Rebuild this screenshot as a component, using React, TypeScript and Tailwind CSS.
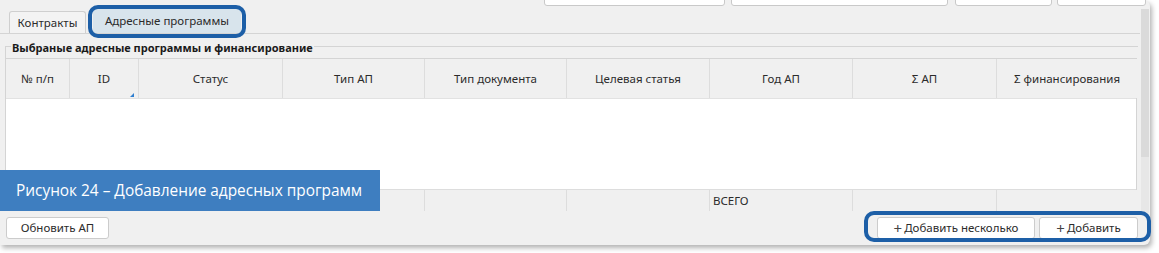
import React from "react";

const cols = [
  { w: "w-[64px]", label: "№ п/п" },
  { w: "w-[69px]", label: "ID", mark: true },
  { w: "w-[144px]", label: "Статус" },
  { w: "w-[142px]", label: "Тип АП" },
  { w: "w-[142px]", label: "Тип документа" },
  { w: "w-[143px]", label: "Целевая статья" },
  { w: "w-[143px]", label: "Год АП", total: true },
  { w: "w-[144px]", label: "Σ АП" },
  { w: "w-[140px]", label: "Σ финансирования", last: true },
];

export default function App() {
  return (
    <div className="relative w-[1159px] h-[253px] bg-white overflow-hidden font-['Noto_Sans',sans-serif] text-[#2b2b2b]">
      <div className="w-[1150px] h-[245px] bg-[#f0f0f0] rounded-r-[6px] shadow-[2px_3px_5px_rgba(0,0,0,0.3)] flex flex-col">
        {/* top buttons (cut off) */}
        <div className="h-[6px] flex items-end pl-[544px]">
          <div className="w-[181px] h-[24px] shrink-0 bg-white border border-[#c9c9c9] rounded-[3px]" />
          <div className="ml-[6px] w-[217px] h-[24px] shrink-0 bg-white border border-[#c9c9c9] rounded-[3px]" />
          <div className="ml-[7px] w-[97px] h-[24px] shrink-0 bg-white border border-[#c9c9c9] rounded-[3px]" />
          <div className="ml-[5px] w-[89px] h-[24px] shrink-0 bg-white border border-[#c9c9c9] rounded-[3px]" />
        </div>
        <div className="flex flex-1">
          {/* main column */}
          <div className="w-[1140px] flex flex-col">
            {/* tab strip */}
            <div className="h-[28px] flex items-end pl-[9px] border-b border-[#d4d4d4]">
              <div className="w-[77px] h-[22px] border border-b-0 border-[#cfcfcf] rounded-t-[3px] bg-[#f3f3f3] flex items-center justify-center text-[11.5px]">
                Контракты
              </div>
              <div className="ml-[7px] w-[148px] h-[25px] bg-[#d8e4ec] rounded-t-[3px] flex items-center justify-center text-[11.5px]">
                Адресные программы
              </div>
            </div>
            {/* group box */}
            <div className="mt-[12px] ml-[5px] w-[1133px] relative border-t border-l border-[#d4d4d4]">
              <div className="absolute left-[5px] -top-[7px] px-[1px] bg-[#f0f0f0] font-bold text-[11px] leading-[16px] text-[#1a1a1a]">
                Выбраные адресные программы и финансирование
              </div>
              <div className="mt-[11px] w-[1131px] border-t border-r border-[#d4d4d4]">
                <div className="flex h-[40px] border-b border-[#e2e2e2]">
                  {cols.map((c, i) => (
                    <div
                      key={i}
                      className={`${c.w} relative shrink-0 bg-[#f0f0f0] flex items-center justify-center text-[11.5px] ${c.last ? "" : "border-r border-[#dddddd]"}`}
                    >
                      {c.label}
                      {c.mark && (
                        <div className="absolute right-[4px] bottom-[1px] w-0 h-0 border-l-[4px] border-l-transparent border-b-[4px] border-b-[#2f7fd0]" />
                      )}
                    </div>
                  ))}
                </div>
                <div className="h-[90px] bg-white" />
                <div className="flex h-[22px] border-t border-[#dddddd]">
                  {cols.map((c, i) => (
                    <div
                      key={i}
                      className={`${c.w} shrink-0 bg-[#f0f0f0] flex items-center pl-[3px] text-[11.5px] ${c.last ? "" : "border-r border-[#dddddd]"}`}
                    >
                      {c.total ? "ВСЕГО" : ""}
                    </div>
                  ))}
                </div>
              </div>
            </div>
            {/* bottom buttons */}
            <div className="mt-[6px] flex items-center pl-[6px]">
              <div className="w-[103px] h-[22px] bg-white border border-[#cccccc] rounded-[3px] flex items-center justify-center text-[11.5px]">
                Обновить АП
              </div>
              <div className="ml-auto w-[158px] h-[22px] bg-white border border-[#cccccc] rounded-[3px] flex items-center justify-center text-[11.5px]">
                <span className="text-[15px] leading-none mr-[2px] text-[#444]">+</span>Добавить несколько
              </div>
              <div className="ml-[4px] mr-[2px] w-[99px] h-[22px] bg-white border border-[#cccccc] rounded-[3px] flex items-center justify-center text-[11.5px]">
                <span className="text-[15px] leading-none mr-[2px] text-[#444]">+</span>Добавить
              </div>
            </div>
          </div>
          {/* scrollbar */}
          <div className="w-[10px] flex flex-col pl-[1px]">
            <div className="mt-[3px] h-[148px] w-[8px] bg-[#dadada]" />
            <div className="h-[56px] w-[8px] bg-[#e7e7e7]" />
          </div>
        </div>
      </div>

      {/* highlight around selected tab */}
      <div className="absolute left-[88px] top-[5px] w-[158px] h-[33px] border-4 border-[#1d5fa7] rounded-[10px]" />
      {/* highlight around add buttons */}
      <div className="absolute left-[864px] top-[211px] w-[287px] h-[31px] border-4 border-[#1d5fa7] rounded-[10px]" />
      {/* caption */}
      <div className="absolute left-0 top-[170px] w-[380px] h-[41px] bg-[#3e7ec0] flex items-center pl-[16px] text-white text-[15.4px] font-medium font-['Open_Sans',sans-serif]">
        Рисунок 24 – Добавление адресных программ
      </div>
    </div>
  );
}
